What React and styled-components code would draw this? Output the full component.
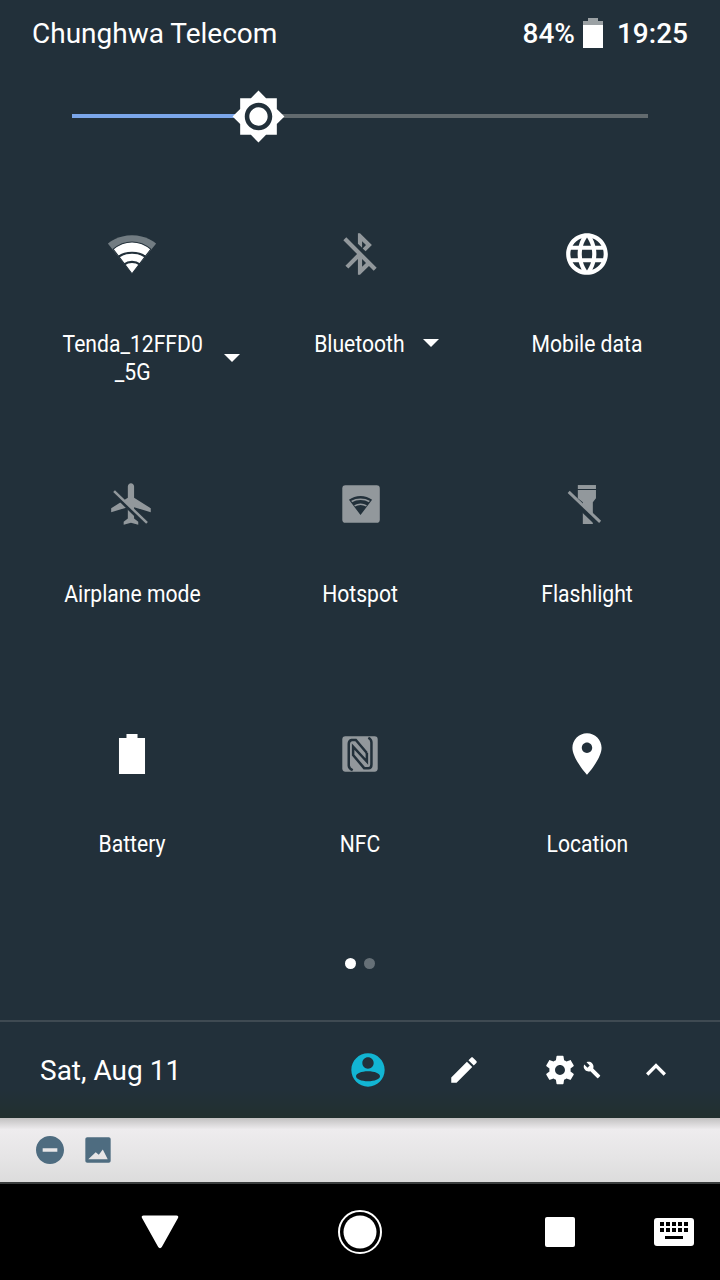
import React from 'react';
import styled, { createGlobalStyle } from 'styled-components';

const BG = '#22303a';
const OFF = '#92989c';

const GlobalStyle = createGlobalStyle`
  *, *::before, *::after {
    box-sizing: border-box;
  }
  html, body {
    margin: 0;
    padding: 0;
    width: 720px;
    height: 1280px;
    overflow: hidden;
    background: #000;
  }
`;

const Screen = styled.div`
  width: 720px;
  height: 1280px;
  display: flex;
  flex-direction: column;
  font-family: Roboto, "Liberation Sans", sans-serif;
  color: #fff;
  background: ${BG};
`;

const StatusBar = styled.div`
  height: 66px;
  padding: 0 32px;
  display: flex;
  align-items: center;
  justify-content: space-between;
  font-size: 28px;
`;

const StatusRight = styled.div`
  display: flex;
  align-items: center;
  font-weight: 500;
`;

const StatusBattery = styled.svg`
  width: 20px;
  height: 30px;
  margin: 0 14px 0 8px;
`;

const SliderRow = styled.div`
  height: 100px;
  padding: 0 72px;
  display: flex;
  align-items: center;
`;

const SliderFill = styled.div`
  width: 162.5px;
  height: 4px;
  background: #7ba6ea;
`;

const SliderThumb = styled.svg`
  width: 55px;
  height: 55px;
  margin: 0 -4px;
  position: relative;
  flex: none;
`;

const SliderRest = styled.div`
  flex: 1;
  height: 4px;
  background: #626a6e;
`;

const TileGrid = styled.div`
  padding: 51px 18.5px 0;
  display: grid;
  grid-template-columns: repeat(3, 227.5px);
  grid-auto-rows: 250px;
`;

const Tile = styled.div`
  display: flex;
  flex-direction: column;
  align-items: center;
`;

const TileIcon = styled.svg`
  margin-top: 12px;
  width: 50px;
  height: 50px;
  flex: none;
  fill: ${props => (props.$off ? OFF : '#fff')};
`;

const LabelRow = styled.div`
  margin-top: 51px;
  display: flex;
  align-items: ${props => (props.$wrapped ? 'center' : 'flex-start')};
`;

const TileLabel = styled.div`
  font-size: 24px;
  line-height: 28px;
  text-align: center;
  white-space: pre;
  transform: scaleX(0.88);
`;

const Caret = styled.div`
  width: 0;
  height: 0;
  border-left: 8px solid transparent;
  border-right: 8px solid transparent;
  border-top: 8px solid #fff;
  margin: ${props => (props.$wrapped ? '0' : '9px')} -28px 0 12px;
`;

const Dots = styled.div`
  height: 30px;
  margin-top: -19px;
  display: flex;
  align-items: center;
  justify-content: center;
  gap: 8px;
`;

const Dot = styled.div`
  width: 11px;
  height: 11px;
  border-radius: 50%;
  background: ${props => (props.$active ? '#fff' : '#667077')};
`;

const Footer = styled.div`
  margin-top: auto;
  height: 98px;
  border-top: 2px solid #3f4a52;
  display: flex;
  align-items: center;
  padding-left: 40px;
  background: linear-gradient(${BG} 70%, #22302f);
`;

const DateText = styled.div`
  font-size: 28px;
  width: 308px;
`;

const FooterIcon = styled.svg`
  width: ${props => props.$size}px;
  height: ${props => props.$size}px;
  fill: ${props => props.$color || '#fff'};
  flex: none;
  margin-left: ${props => props.$gap || 0}px;
`;

const Notice = styled.div`
  flex: none;
  height: 66px;
  padding: 0 0 0 34px;
  display: flex;
  align-items: center;
  gap: 16px;
  background: linear-gradient(#c2c1c1, #eeecee 18%, #e6e5e6 60%, #dcdcdc);
  border-bottom: 2px solid #3a3d3d;
`;

const NoticeIcon = styled.svg`
  width: 32px;
  height: 32px;
  fill: #4e6c80;
  flex: none;
`;

const NavBar = styled.div`
  flex: none;
  height: 96px;
  background: #000;
  display: flex;
  align-items: center;
  padding-left: 136px;
`;

const NavIcon = styled.svg`
  flex: none;
  width: 48px;
  height: 48px;
  fill: #fff;
  margin-right: ${props => props.$right || 0}px;
`;

const paths = {
  btOff: 'M13 5.83l1.88 1.88-1.6 1.6 1.41 1.41 3.02-3.02L12 2h-1v5.03l2 2v-3.2zM5.41 4L4 5.41 10.59 12 5 17.59 6.41 19 11 14.41V22h1l4.29-4.29 2.3 2.29L20 18.59 5.41 4zM13 18.17v-3.76l1.88 1.88L13 18.17z',
  globe: 'M11.99 2C6.47 2 2 6.48 2 12s4.47 10 9.99 10C17.52 22 22 17.52 22 12S17.52 2 11.99 2zm6.93 6h-2.95c-.32-1.25-.78-2.45-1.38-3.56 1.84.63 3.37 1.91 4.33 3.56zM12 4.04c.83 1.2 1.48 2.53 1.91 3.96h-3.82c.43-1.43 1.08-2.76 1.91-3.96zM4.26 14C4.1 13.36 4 12.69 4 12s.1-1.36.26-2h3.38c-.08.66-.14 1.32-.14 2 0 .68.06 1.34.14 2H4.26zm.82 2h2.95c.32 1.25.78 2.45 1.38 3.56-1.84-.63-3.37-1.9-4.33-3.56zm2.95-8H5.08c.96-1.66 2.49-2.93 4.33-3.56C8.81 5.55 8.35 6.75 8.03 8zM12 19.96c-.83-1.2-1.48-2.53-1.91-3.96h3.82c-.43 1.43-1.08 2.76-1.91 3.96zM14.34 14H9.66c-.09-.66-.16-1.32-.16-2 0-.68.07-1.35.16-2h4.68c.09.65.16 1.32.16 2 0 .68-.07 1.34-.16 2zm.25 5.56c.6-1.11 1.06-2.31 1.38-3.56h2.95c-.96 1.65-2.49 2.93-4.33 3.56zM16.36 14c.08-.66.14-1.32.14-2 0-.68-.06-1.34-.14-2h3.38c.16.64.26 1.31.26 2s-.1 1.36-.26 2h-3.38z',
  plane: 'M21 16v-2l-8-5V3.5c0-.83-.67-1.5-1.5-1.5S10 2.67 10 3.5V9l-8 5v2l8-2.5V19l-2 1.5V22l3.5-1 3.5 1v-1.5L13 19v-5.500l8 2.500z',
  pin: 'M12 2C8.13 2 5 5.13 5 9c0 5.25 7 13 7 13s7-7.75 7-13c0-3.87-3.13-7-7-7zm0 9.5c-1.38 0-2.5-1.12-2.5-2.5s1.12-2.5 2.5-2.5 2.5 1.12 2.5 2.5-1.12 2.5-2.5 2.5z',
  battery: 'M9.35 2.4h5.3v1.9h3.6v17.3H5.75V4.3h3.6z',
  pencil: 'M3 17.25V21h3.75L17.81 9.94l-3.75-3.75L3 17.25zM20.71 7.04c.39-.39.39-1.02 0-1.41l-2.34-2.34c-.39-.39-1.02-.39-1.41 0l-1.83 1.83 3.75 3.75 1.83-1.83z',
  gear: 'M19.43 12.98c.04-.32.07-.64.07-.98s-.03-.66-.07-.98l2.11-1.65c.19-.15.24-.42.12-.64l-2-3.46c-.12-.22-.39-.3-.61-.22l-2.49 1c-.52-.4-1.08-.73-1.69-.98l-.38-2.65C14.46 2.18 14.25 2 14 2h-4c-.25 0-.46.18-.49.42l-.38 2.65c-.61.25-1.17.59-1.69.98l-2.49-1c-.23-.09-.49 0-.61.22l-2 3.46c-.13.22-.07.49.12.64l2.11 1.65c-.04.32-.07.65-.07.98s.03.66.07.98l-2.11 1.65c-.19.15-.24.42-.12.64l2 3.46c.12.22.39.3.61.22l2.49-1c.52.4 1.08.73 1.69.98l.38 2.65c.03.24.24.42.49.42h4c.25 0 .46-.18.49-.42l.38-2.65c.61-.25 1.17-.59 1.69-.98l2.49 1c.23.09.49 0 .61-.22l2-3.46c.12-.22.07-.49-.12-.64l-2.11-1.65zM12 15.5c-1.93 0-3.5-1.57-3.5-3.5s1.57-3.5 3.5-3.5 3.5 1.57 3.5 3.5-1.57 3.5-3.5 3.5z',
  wrench: 'M22.7 19l-9.1-9.1c.9-2.3.4-5-1.5-6.9-2-2-5-2.4-7.4-1.3L9 6 6 9 1.6 4.7C.4 7.1.9 10.1 2.9 12.1c1.9 1.9 4.6 2.4 6.9 1.5l9.1 9.1c.4.4 1 .4 1.4 0l2.3-2.3c.5-.4.5-1.1.1-1.4z',
  chevron: 'M12 8l-6 6 1.41 1.41L12 10.83l4.59 4.58L18 14z',
  person: 'M12 2C6.48 2 2 6.48 2 12s4.48 10 10 10 10-4.48 10-10S17.52 2 12 2zm0 2.400c1.880 0 3.400 1.520 3.400 3.400S13.880 11.200 12 11.200 8.600 9.680 8.600 7.800 10.120 4.400 12 4.400zm0 8.300c3.980 0 7.200 1.340 7.200 3s-3.220 3-7.200 3-7.200-1.340-7.200-3 3.220-3 7.200-3z',
};

const Wifi = () => (
  <TileIcon viewBox="0 0 24 24">
    <path d="M12 21.5L.4 7C1 6.5 5.3 3 12 3s11 3.5 11.600 4L12 21.500z" fill="#727c82" />
    <path d="M12 21.500L3 9.700C5.500 7.500 8.600 6.200 12 6.200s6.500 1.300 9 3.500L12 21.500z" fill="#fff" stroke={BG} strokeWidth="0.5" />
    <path d="M5.600 13.300C7.300 12 9.500 11.400 12 11.400s4.700.6 6.400 1.900" fill="none" stroke={BG} strokeWidth="1" />
    <path d="M8.300 17C9.300 16.200 10.600 15.800 12 15.800s2.700.4 3.700 1.200" fill="none" stroke={BG} strokeWidth="1" />
  </TileIcon>
);

const Airplane = () => (
  <TileIcon $off viewBox="0 0 24 24">
    <path d={paths.plane} />
    <path d="M3 6.700L18.400 21.800" fill="none" stroke={BG} strokeWidth="1.800" />
    <path d="M3.400 5.800L19.200 21.100" fill="none" stroke={OFF} strokeWidth="1.200" />
  </TileIcon>
);

const Hotspot = () => (
  <TileIcon $off viewBox="0 0 24 24">
    <rect x="3.500" y="3" width="18" height="18" rx="1.500" />
    <path d="M12.250 17.300L6.700 10c1.500-1.100 3.500-1.800 5.550-1.800s4.050.7 5.550 1.800l-5.550 7.300z" fill={BG} />
    <path d="M8 10.800c1.200-.7 2.700-1.100 4.250-1.100s3.050.4 4.250 1.100M9.400 12.900c.8-.5 1.800-.8 2.850-.8s2.050.3 2.850.8" fill="none" stroke={OFF} strokeWidth="0.7" />
  </TileIcon>
);

const Flashlight = () => (
  <TileIcon $off viewBox="0 0 24 24">
    <rect x="7.600" y="2.900" width="8.700" height="1.900" />
    <path d="M7.600 5.300h8.700v3.900l-1.500 2v10.400h-4.800V11.200l-2.400-2z" />
    <path d="M2.800 7.400L17.600 21.600" fill="none" stroke={BG} strokeWidth="3" />
    <path d="M3.200 6.200L18.300 20.600" fill="none" stroke={OFF} strokeWidth="1.400" />
  </TileIcon>
);

const Nfc = () => (
  <TileIcon $off viewBox="0 0 24 24">
    <rect x="3.500" y="3.500" width="17" height="17" rx="1.500" />
    <g fill="none" stroke={BG} strokeWidth="1.200">
      <path d="M15.300 11.500L10 5.300H8C7 5.500 6.600 6.200 6.600 7.200V17.500C6.600 18.500 7.500 19.300 8.500 19.800" />
      <path d="M16 4.200C17 4.700 17.500 5.500 17.500 6.500V17C17.500 18 17 18.800 16 18.800H14L8.700 12.500V8.500L15.300 15.600V11.500" />
    </g>
  </TileIcon>
);

const tiles = [
  { label: 'Tenda_12FFD0\n_5G', wrapped: true, caret: true, icon: <Wifi /> },
  { label: 'Bluetooth', caret: true, icon: <TileIcon $off viewBox="0 0 24 24"><path d={paths.btOff} /></TileIcon> },
  { label: 'Mobile data', icon: <TileIcon viewBox="0 0 24 24"><path d={paths.globe} /></TileIcon> },
  { label: 'Airplane mode', icon: <Airplane /> },
  { label: 'Hotspot', icon: <Hotspot /> },
  { label: 'Flashlight', icon: <Flashlight /> },
  { label: 'Battery', icon: <TileIcon viewBox="0 0 24 24"><path d={paths.battery} /></TileIcon> },
  { label: 'NFC', icon: <Nfc /> },
  { label: 'Location', icon: <TileIcon viewBox="0 0 24 24"><path d={paths.pin} /></TileIcon> },
];

const App = () => (
  <Screen>
    <GlobalStyle />
    <StatusBar>
      <div>Chunghwa Telecom</div>
      <StatusRight>
        84%
        <StatusBattery viewBox="0 0 20 30">
          <path d="M5 0h10v3h5v6H0V3h5z" fill="#9ba1a4" />
          <rect y="7" width="20" height="23" fill="#fff" />
        </StatusBattery>
        19:25
      </StatusRight>
    </StatusBar>
    <SliderRow>
      <SliderFill />
      <SliderThumb viewBox="0 0 24 24">
        <circle cx="12" cy="12" r="7" fill={BG} />
        <path fill="#fff" d="M20 8.690V4h-4.690L12 .69 8.690 4H4v4.690L.69 12 4 15.310V20h4.690L12 23.310 15.310 20H20v-4.690L23.310 12 20 8.690zM12 18c-3.310 0-6-2.690-6-6s2.690-6 6-6 6 2.690 6 6-2.690 6-6 6zm0-10c-2.210 0-4 1.790-4 4s1.790 4 4 4 4-1.790 4-4-1.790-4-4-4z" />
      </SliderThumb>
      <SliderRest />
    </SliderRow>
    <TileGrid>
      {tiles.map(t => (
        <Tile key={t.label}>
          {t.icon}
          <LabelRow $wrapped={t.wrapped}>
            <TileLabel>{t.label}</TileLabel>
            {t.caret && <Caret $wrapped={t.wrapped} />}
          </LabelRow>
        </Tile>
      ))}
    </TileGrid>
    <Dots>
      <Dot $active />
      <Dot />
    </Dots>
    <Footer>
      <DateText>Sat, Aug 11</DateText>
      <FooterIcon viewBox="0 0 24 24" $size={40} $color="#12b5d3"><path fillRule="evenodd" d={paths.person} /></FooterIcon>
      <FooterIcon viewBox="0 0 24 24" $size={34} $gap={59}><path d={paths.pencil} /></FooterIcon>
      <FooterIcon viewBox="0 0 24 24" $size={34} $gap={62}><path d={paths.gear} /></FooterIcon>
      <FooterIcon viewBox="0 0 24 24" $size={18} $gap={6}><path d={paths.wrench} /></FooterIcon>
      <FooterIcon viewBox="0 0 24 24" $size={40} $gap={35}><path d={paths.chevron} /></FooterIcon>
    </Footer>
    <Notice>
      <NoticeIcon viewBox="0 0 24 24"><path d="M12 1.500C6.200 1.500 1.500 6.200 1.500 12S6.200 22.500 12 22.500 22.500 17.800 22.500 12 17.800 1.500 12 1.500zM17.500 13.300h-11v-2.600h11z" /></NoticeIcon>
      <NoticeIcon viewBox="0 0 24 24"><path fillRule="evenodd" d="M4 2.500h16c.9 0 1.500.6 1.500 1.500v16c0 .9-.6 1.500-1.500 1.500H4c-.9 0-1.500-.6-1.500-1.500V4c0-.9.6-1.500 1.500-1.500zM4.700 19l5.600-5.400 2.300 1.900 3-3.800 3.700 7.300z" /></NoticeIcon>
    </Notice>
    <NavBar>
      <NavIcon viewBox="0 0 48 48" $right={152}><path d="M6 10c-.8-1.500 0-2.500 1.500-2.500h33c1.500 0 2.300 1 1.500 2.500L25.800 39c-.8 1.500-2.800 1.500-3.600 0z" /></NavIcon>
      <NavIcon viewBox="0 0 48 48" $right={152}>
        <circle cx="24" cy="24" r="21" fill="none" stroke="#fff" strokeWidth="2" />
        <circle cx="24" cy="24" r="16.500" />
      </NavIcon>
      <NavIcon viewBox="0 0 48 48" $right={66}><rect x="9" y="9" width="30" height="30" rx="2" /></NavIcon>
      <NavIcon viewBox="0 0 48 48"><path fillRule="evenodd" d="M7 10h34c2 0 3 1 3 3v22c0 2-1 3-3 3H7c-2 0-3-1-3-3V13c0-2 1-3 3-3zm3 4v4h4v-4zm6 0v4h4v-4zm6 0v4h4v-4zm6 0v4h4v-4zm6 0v4h4v-4zM10 20v4h4v-4zm6 0v4h4v-4zm6 0v4h4v-4zm6 0v4h4v-4zm6 0v4h4v-4zM15 28v3h18v-3z" /></NavIcon>
    </NavBar>
  </Screen>
);

export default App;
